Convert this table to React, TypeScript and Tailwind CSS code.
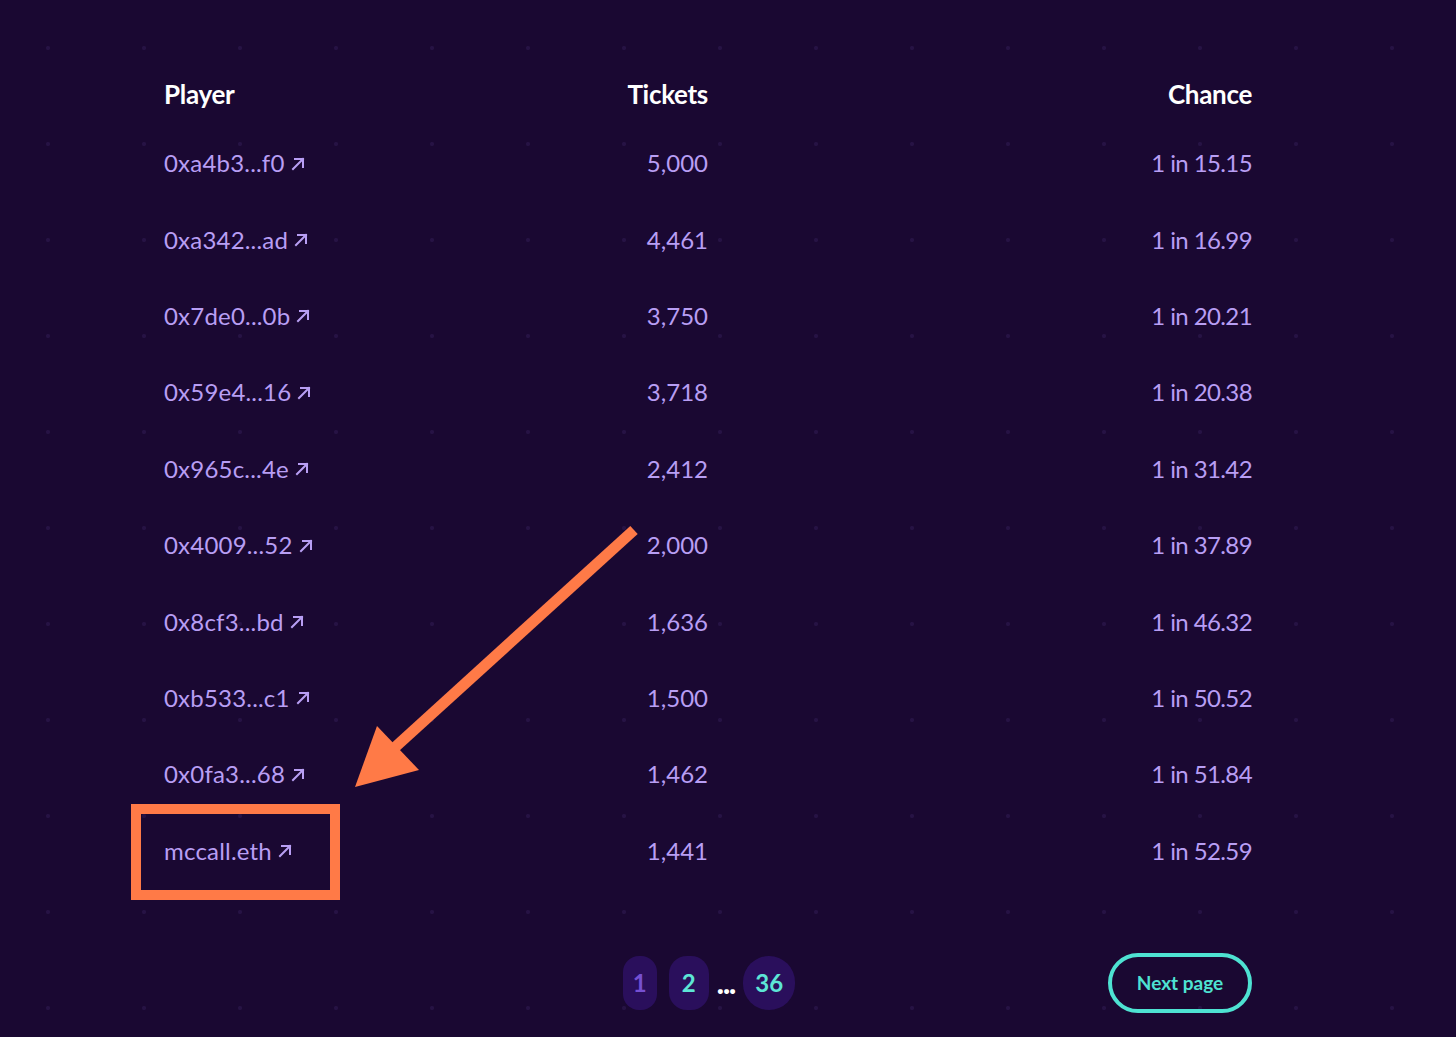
import React from "react";

const rows = [
  ["0xa4b3...f0", "5,000", "1 in 15.15"],
  ["0xa342...ad", "4,461", "1 in 16.99"],
  ["0x7de0...0b", "3,750", "1 in 20.21"],
  ["0x59e4...16", "3,718", "1 in 20.38"],
  ["0x965c...4e", "2,412", "1 in 31.42"],
  ["0x4009...52", "2,000", "1 in 37.89"],
  ["0x8cf3...bd", "1,636", "1 in 46.32"],
  ["0xb533...c1", "1,500", "1 in 50.52"],
  ["0x0fa3...68", "1,462", "1 in 51.84"],
  ["mccall.eth", "1,441", "1 in 52.59"],
];

function ExternalArrow() {
  return (
    <svg width="14" height="14" viewBox="0 0 14 14" fill="none" className="ml-[6px] mt-[1px] shrink-0">
      <path d="M2 12L12 2M4 2h8v8" stroke="currentColor" strokeWidth="2" strokeLinecap="square" />
    </svg>
  );
}

export default function App() {
  return (
    <div className="relative w-[1456px] h-[1037px] overflow-hidden bg-[#1a0832] bg-[radial-gradient(circle,rgba(120,90,190,0.13)_1.5px,transparent_2.5px)] bg-[length:96px_96px] font-['Lato','Noto_Sans',sans-serif]">
      <div className="ml-[164px] w-[1088px] pt-[63px]">
        {/* Header */}
        <div className="grid grid-cols-[300px_244px_544px] h-[62px] items-center text-[26px] font-bold text-white tracking-[-0.3px]">
          <div>Player</div>
          <div className="text-right">Tickets</div>
          <div className="text-right">Chance</div>
        </div>

        {/* Rows */}
        {rows.map(([player, tickets, chance], i) => (
          <div
            key={player}
            className="grid grid-cols-[300px_244px_544px] h-[76.4px] items-center text-[24px] text-[#b89ef4]"
          >
            <div className="relative flex items-center">
              <a className="flex items-center no-underline tracking-[0.2px]">
                {player}
                <ExternalArrow />
              </a>
              {i === rows.length - 1 && (
                <div className="absolute left-[-33px] top-[-29px] w-[209px] h-[96px] border-[10px] border-[#ff7a47]" />
              )}
            </div>
            <div className="text-right">{tickets}</div>
            <div className="text-right tracking-[-0.6px]">{chance}</div>
          </div>
        ))}

        {/* Pagination */}
        <div className="grid grid-cols-3 h-[60px] mt-[64px] items-center">
          <div />
          <div className="flex items-center justify-center gap-[8px] pl-[2px]">
            <button className="h-[54px] w-[34px] rounded-[16px] bg-[#2a0f5c] text-[24px] font-bold text-[#7650d2]">1</button>
            <button className="ml-[4px] h-[54px] w-[40px] rounded-[18px] bg-[#2a0f5c] text-[24px] font-bold text-[#5de5d6]">2</button>
            <span className="text-[30px] font-black text-white leading-none pb-[2px] tracking-[-1px]">...</span>
            <button className="h-[54px] w-[52px] rounded-full bg-[#2a0f5c] text-[24px] font-bold text-[#5de5d6]">36</button>
          </div>
          <div className="flex justify-end">
            <button className="h-[60px] w-[144px] rounded-full border-[4px] border-[#4ee2d2] text-[19px] font-bold text-[#4ee2d2]">
              Next page
            </button>
          </div>
        </div>
      </div>

      {/* Annotation arrow */}
      <svg className="absolute left-0 top-0 pointer-events-none" width="1456" height="1037" viewBox="0 0 1456 1037">
        <line x1="634" y1="530" x2="392" y2="750" stroke="#ff7a47" strokeWidth="11" />
        <polygon points="355,787 377,726 419,770" fill="#ff7a47" />
      </svg>
    </div>
  );
}
